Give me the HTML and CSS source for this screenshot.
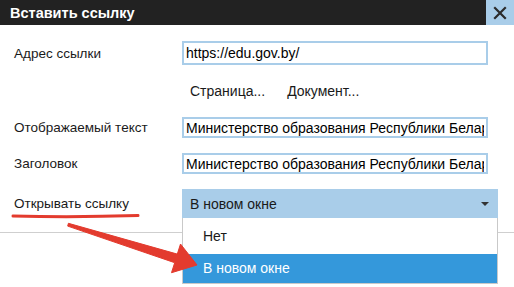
FILE: index.html
```html
<!DOCTYPE html>
<html lang="ru">
<head>
    <meta charset="UTF-8">
    <meta name="viewport" content="width=device-width, initial-scale=1.0">
    <title>Вставить ссылку</title>
    <link rel="stylesheet" href="styles.css">
</head>
<body>
    <div class="dialog">
        <div class="dialog-title">
            <span>Вставить ссылку</span>
            <button class="close" title="Закрыть">
                <svg width="14" height="14" viewBox="0 0 14 14">
                    <path d="M2 2 L12 12 M12 2 L2 12" stroke="#2b2b2b" stroke-width="2.2" stroke-linecap="square"/>
                </svg>
            </button>
        </div>

        <div class="form">
            <label class="field-label">Адрес ссылки</label>
            <input type="text" class="field" value="https://edu.gov.by/">

            <div></div>
            <div class="browse">
                <button class="link-btn">Страница...</button>
                <button class="link-btn">Документ...</button>
            </div>

            <label class="field-label">Отображаемый текст</label>
            <input type="text" class="field short" value="Министерство образования Республики Беларусь">

            <label class="field-label">Заголовок</label>
            <input type="text" class="field short" value="Министерство образования Республики Беларусь">

            <label class="field-label">Открывать ссылку</label>
            <div class="select">
                <div class="select-value">
                    <span>В новом окне</span>
                    <span class="caret"></span>
                </div>
                <ul class="options">
                    <li>Нет</li>
                    <li class="selected">В новом окне</li>
                </ul>
            </div>
        </div>

        <div class="footer"></div>

        <!-- annotation -->
        <svg class="marks" width="514" height="287" viewBox="0 0 514 287">
            <path d="M13 216 Q75 217.5 138 215.5" stroke="#e33b2e" stroke-width="3" fill="none" stroke-linecap="round"/>
            <polygon points="68.4,223.3 177.3,254.1 180.5,244 197,265 171.5,272.7 174.7,262.7 67.7,226.1"
                     fill="#e33b2e" stroke="#e33b2e" stroke-width="1" stroke-linejoin="round"/>
        </svg>
    </div>
</body>
</html>
```

FILE: styles.css
```css
body {
    margin: 0;
    padding: 0;
    background: #fff;
    font-family: "Liberation Sans", Arial, sans-serif;
    font-size: 13.5px;
    color: #1a1a1a;
}

.dialog {
    position: relative;
    width: 514px;
    height: 287px;
    overflow: hidden;
}

.dialog-title {
    display: flex;
    justify-content: space-between;
    align-items: center;
    height: 25px;
    padding-left: 10px;
    background: #222222;
    color: #fff;
    font-weight: bold;
    font-size: 14.5px;
}

.close {
    width: 28px;
    height: 25px;
    border: none;
    padding: 0;
    background: #a9cde9;
    display: flex;
    align-items: center;
    justify-content: center;
}

.form {
    display: grid;
    grid-template-columns: 168px 316px;
    grid-template-rows: 24px 22px 21px 21px 29px;
    row-gap: 15px;
    align-items: center;
    padding: 16px 0 0 14px;
}

.field {
    box-sizing: border-box;
    width: 306px;
    height: 24px;
    margin: 0;
    padding: 0 2px;
    border: 2px solid #a9cde9;
    font-family: inherit;
    font-size: 14px;
    color: #000;
    outline: none;
}

.field.short {
    height: 21px;
}

.browse {
    display: flex;
    gap: 22px;
    padding-left: 8px;
}

.link-btn {
    border: none;
    background: none;
    padding: 0;
    font-family: inherit;
    font-size: 14px;
    color: #1a1a1a;
}

.select {
    position: relative;
    height: 29px;
}

.select-value {
    display: flex;
    justify-content: space-between;
    align-items: center;
    height: 29px;
    padding: 0 9px 0 8px;
    background: #a9cde9;
    font-size: 14px;
}

.caret {
    width: 0;
    height: 0;
    border-left: 4px solid transparent;
    border-right: 4px solid transparent;
    border-top: 4px solid #333;
}

.options {
    position: absolute;
    z-index: 2;
    top: 29px;
    left: 0;
    right: 0;
    margin: 0;
    padding: 0;
    list-style: none;
    background: #fff;
    border: 1px solid #c9c9c9;
    border-top: none;
}

.options li {
    height: 36px;
    line-height: 36px;
    padding-left: 20px;
    font-size: 14px;
}

.options li.selected {
    height: 29px;
    line-height: 29px;
    background: #3498db;
    color: #fff;
}

.footer {
    margin-top: 14px;
    border-top: 1px solid #cfcfcf;
}

.marks {
    position: absolute;
    top: 0;
    left: 0;
    z-index: 3;
    pointer-events: none;
}
```
